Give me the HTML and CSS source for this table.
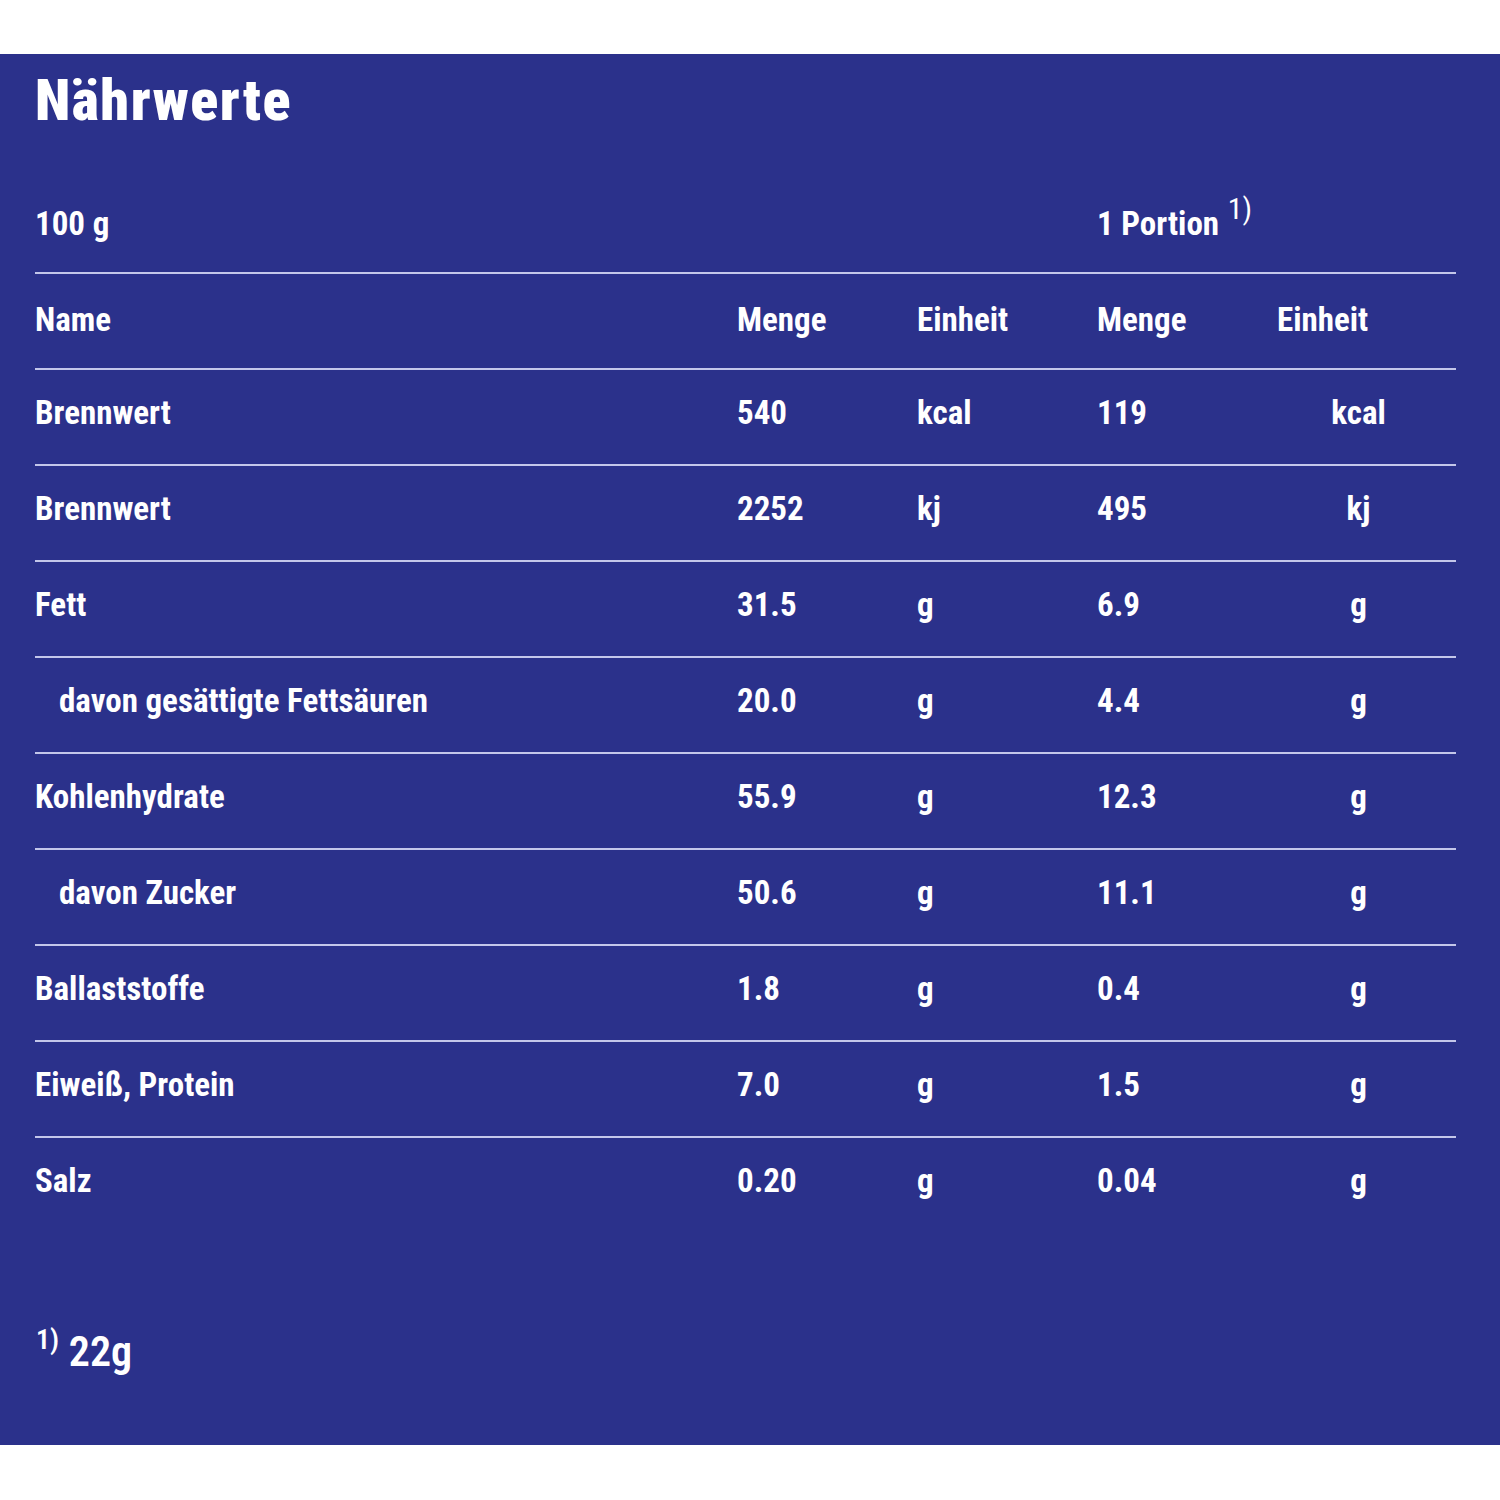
FILE: index.html
```html
<!DOCTYPE html>
<html lang="de">
<head>
<meta charset="utf-8">
<title>Nährwerte</title>
<link rel="stylesheet" href="styles.css">
</head>
<body>
<section class="panel">
  <h2 class="title">Nährwerte</h2>
  <table class="nutri">
    <colgroup>
      <col class="c-name"><col class="c-num"><col class="c-num"><col class="c-num"><col class="c-unit">
    </colgroup>
    <thead>
      <tr class="group">
        <th colspan="3">100 g</th>
        <th colspan="2">1 Portion <sup class="ref">1)</sup></th>
      </tr>
      <tr class="heads">
        <th>Name</th><th>Menge</th><th>Einheit</th><th>Menge</th><th>Einheit</th>
      </tr>
    </thead>
    <tbody>
      <tr><td>Brennwert</td><td>540</td><td>kcal</td><td>119</td><td class="unit">kcal</td></tr>
      <tr><td>Brennwert</td><td>2252</td><td>kj</td><td>495</td><td class="unit">kj</td></tr>
      <tr><td>Fett</td><td>31.5</td><td>g</td><td>6.9</td><td class="unit">g</td></tr>
      <tr><td class="sub">davon gesättigte Fettsäuren</td><td>20.0</td><td>g</td><td>4.4</td><td class="unit">g</td></tr>
      <tr><td>Kohlenhydrate</td><td>55.9</td><td>g</td><td>12.3</td><td class="unit">g</td></tr>
      <tr><td class="sub">davon Zucker</td><td>50.6</td><td>g</td><td>11.1</td><td class="unit">g</td></tr>
      <tr><td>Ballaststoffe</td><td>1.8</td><td>g</td><td>0.4</td><td class="unit">g</td></tr>
      <tr><td>Eiweiß, Protein</td><td>7.0</td><td>g</td><td>1.5</td><td class="unit">g</td></tr>
      <tr class="last"><td>Salz</td><td>0.20</td><td>g</td><td>0.04</td><td class="unit">g</td></tr>
    </tbody>
  </table>
  <p class="foot"><sup class="fref">1)</sup> 22g</p>
</section>
</body>
</html>
```

FILE: styles.css
```css
html, body {
  margin: 0;
  padding: 0;
  background: #ffffff;
}
body {
  padding-top: 54px;
  font-family: Roboto, "Open Sans", "DejaVu Sans Condensed", sans-serif;
  font-stretch: 75%;
  color: #ffffff;
}
.panel {
  background: #2b318b;
  height: 1391px;
  box-sizing: border-box;
  padding: 20px 44px 0 35px;
}
.title {
  margin: 0;
  font-size: 58px;
  line-height: 52px;
  font-weight: 900;
  letter-spacing: 1.5px;
}
.nutri {
  margin-top: 52px;
  width: 1421px;
  border-collapse: collapse;
  table-layout: fixed;
  font-size: 33px;
  font-weight: 700;
}
.c-name { width: 702px; }
.c-num { width: 180px; }
.c-unit { width: 179px; }
.nutri th, .nutri td {
  text-align: left;
  padding: 0 0 10px 0;
  height: 84px;
  vertical-align: middle;
  font-weight: 700;
  white-space: nowrap;
}
.nutri thead th {
  padding-bottom: 3px;
  height: 91px;
}
.nutri tr {
  border-bottom: 2px solid #c3c6ea;
}
.nutri tr.last {
  border-bottom: none;
}
.ref {
  font-size: 30px;
  font-weight: 400;
  vertical-align: 0;
  position: relative;
  top: -16px;
  margin-left: 1px;
}
.nutri td.sub {
  padding-left: 24px;
}
.nutri td.unit {
  text-align: center;
  padding-right: 16px;
}
.foot {
  margin: 91px 0 0 1px;
  font-size: 42px;
  line-height: 57px;
  font-weight: 600;
}
.fref {
  font-size: 28px;
  font-weight: 600;
  vertical-align: 0;
  position: relative;
  top: -17px;
}
```
